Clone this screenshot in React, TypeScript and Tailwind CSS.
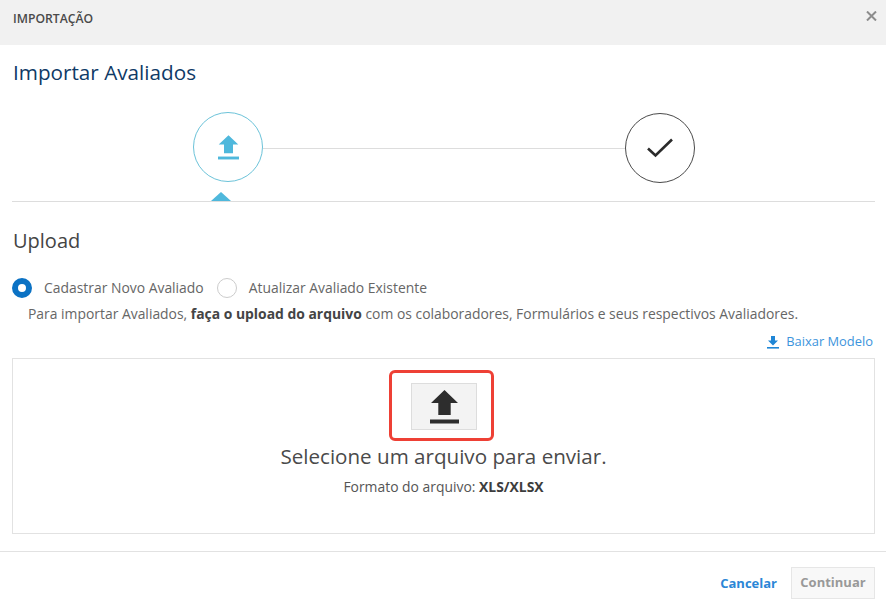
import React from "react";

function UploadIcon({ className }: { className: string }) {
  return (
    <svg viewBox="0 0 29 34" className={className} fill="currentColor">
      <path d="M14.5 0 L28 13 L20.7 13 L20.7 25 L8.3 25 L8.3 13 L1 13 Z" />
      <rect x="0" y="29.5" width="29" height="4" />
    </svg>
  );
}

function DownloadIcon({ className }: { className: string }) {
  return (
    <svg viewBox="0 0 12 13" className={className} fill="currentColor">
      <path d="M4 0 H8 V4.5 H11 L6 9.5 L1 4.5 H4 Z" />
      <rect x="0" y="11" width="12" height="1.6" />
    </svg>
  );
}

export default function App() {
  return (
    <div
      className="w-[886px] h-[609px] bg-white overflow-hidden flex flex-col text-[#555555]"
      style={{ fontFamily: '"Open Sans", "Noto Sans", sans-serif' }}
    >
      <header className="h-[45px] shrink-0 bg-[#f1f1f1] flex items-start justify-between pl-[13px] pr-[9px]">
        <span className="mt-[11px] text-[12.2px] leading-[16px] font-semibold text-[#4a4a4a]">IMPORTAÇÃO</span>
        <svg viewBox="0 0 10 10" className="mt-[11px] w-[11px] h-[10px] text-[#8c8c8c]" stroke="currentColor" strokeWidth="2" fill="none">
          <path d="M0.5 0.5 L9.5 9.5 M9.5 0.5 L0.5 9.5" />
        </svg>
      </header>

      <main className="flex-1 flex flex-col pl-3 pr-[11px]">
        <h1 className="mt-[14px] ml-px text-[20.7px] leading-[27px] font-medium text-[#0f3a66]">Importar Avaliados</h1>

        <div className="relative mt-[26px] h-[90px] border-b border-[#dddddd]">
          <div className="flex items-start pl-[181px]">
            <div className="w-[70px] h-[70px] rounded-full border border-[#6cc3d9] bg-white flex items-center justify-center">
              <UploadIcon className="w-[21px] h-[25px] text-[#4fb8dc]" />
            </div>
            <div className="w-[362px] h-px mt-[36px] bg-[#dddddd]" />
            <div className="w-[70px] h-[70px] mt-px rounded-full border border-[#4a4a4a] bg-white flex items-center justify-center">
              <svg viewBox="0 0 26 20" className="w-[26px] h-[20px] text-[#2b2b2b]" fill="none" stroke="currentColor" strokeWidth="2.6">
                <path d="M1 10.5 L8.5 17.5 L25 1.5" />
              </svg>
            </div>
          </div>
          <div className="absolute left-[199px] top-[80px] w-0 h-0 border-x-[10px] border-x-transparent border-b-[9px] border-b-[#4fb8dc]" />
        </div>

        <h2 className="mt-[26px] ml-px text-[20px] leading-[26px] font-medium text-[#444444]">Upload</h2>

        <div className="mt-[24px] flex items-center h-[20px] text-[13.9px] text-[#666666]">
          <span className="w-[20px] h-[20px] rounded-full border-[6px] border-[#0b72c4] bg-white" />
          <span className="ml-[12px]">Cadastrar Novo Avaliado</span>
          <span className="ml-[13px] w-[20px] h-[20px] rounded-full border border-[#cccccc] bg-white" />
          <span className="ml-[12px]">Atualizar Avaliado Existente</span>
        </div>

        <p className="mt-[6px] ml-[16px] text-[13.9px] leading-[20px] text-[#666666] whitespace-nowrap">
          Para importar Avaliados, <strong className="font-bold text-[#444444]">faça o upload do arquivo</strong> com os colaboradores, Formulários e seus respectivos Avaliadores.
        </p>

        <div className="mt-[8px] h-[20px] flex items-center justify-end pr-[2px] gap-[7px] text-[12.9px] text-[#3c94dc]">
          <DownloadIcon className="w-[12px] h-[13px] text-[#1f86d6]" />
          <a>Baixar Modelo</a>
        </div>

        <section className="mt-[6px] h-[176px] border border-[#e2e2e2] flex flex-col items-center">
          <div className="mt-[11px] -ml-[4px] w-[105px] h-[71px] rounded-[6px] border-[3px] border-[#ee4035] flex items-start pt-[10px] pl-[19px]">
            <button className="w-[66px] h-[47px] bg-[#f3f3f3] border border-[#dddddd] flex items-center justify-center text-[#2d2d2d]">
              <UploadIcon className="w-[29px] h-[34px]" />
            </button>
          </div>
          <p className="mt-[2px] text-[20.6px] leading-[27px] font-medium text-[#4a4a4a]">Selecione um arquivo para enviar.</p>
          <p className="mt-[8px] text-[13.9px] leading-[18px] text-[#555555]">
            Formato do arquivo: <strong className="font-bold text-[#3d3d3d]">XLS/XLSX</strong>
          </p>
        </section>
      </main>

      <footer className="h-[58px] shrink-0 border-t border-[#e2e2e2] flex items-start justify-end pr-[11px] pt-[15px] gap-[14px]">
        <a className="mt-[7px] text-[13px] leading-[18px] font-bold text-[#2b86d6]">Cancelar</a>
        <button className="w-[84px] h-[32px] bg-[#f8f8f8] border border-[#e6e6e6] text-[13px] font-bold text-[#999999]">Continuar</button>
      </footer>
    </div>
  );
}
